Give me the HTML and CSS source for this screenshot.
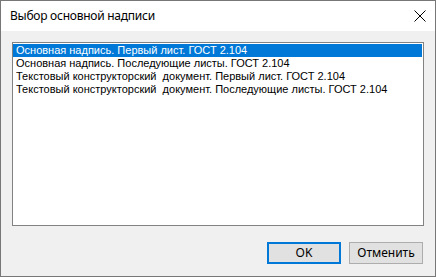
FILE: index.html
```html
<!DOCTYPE html>
<html lang="ru">
<head>
  <meta charset="utf-8">
  <title>Выбор основной надписи</title>
  <link rel="stylesheet" href="styles.css">
</head>
<body>
  <div class="dialog">
    <div class="title-bar">
      <span class="title">Выбор основной надписи</span>
      <button class="close-button" aria-label="Закрыть">
        <svg width="12" height="12" viewBox="0 0 12 12">
          <path d="M0.5 0.5 L11.5 11.5 M11.5 0.5 L0.5 11.5" stroke="#000" stroke-width="1" fill="none"/>
        </svg>
      </button>
    </div>
    <div class="content">
      <ul class="listbox">
        <li class="selected">Основная надпись. Первый лист. ГОСТ 2.104</li>
        <li>Основная надпись. Последующие листы. ГОСТ 2.104</li>
        <li>Текстовый конструкторский&nbsp; документ. Первый лист. ГОСТ 2.104</li>
        <li>Текстовый конструкторский&nbsp; документ. Последующие листы. ГОСТ 2.104</li>
      </ul>
      <div class="button-group">
        <button class="dlg-button default">OK</button>
        <button class="dlg-button">Отменить</button>
      </div>
    </div>
  </div>
</body>
</html>
```

FILE: styles.css
```css
body {
  margin: 0;
  padding: 0;
  background-color: #ffffff;
}

.dialog {
  width: 436px;
  height: 277px;
  box-sizing: border-box;
  border: 1px solid #777777;
  background-color: #f0f0f0;
  display: flex;
  flex-direction: column;
}

.title-bar {
  height: 30px;
  background-color: #ffffff;
  display: flex;
  align-items: center;
  justify-content: space-between;
  padding-left: 9px;
}

.title {
  font-family: "Noto Sans", sans-serif;
  font-size: 12px;
  letter-spacing: -0.25px;
  color: #000000;
  padding-bottom: 1px;
}

.close-button {
  width: 46px;
  height: 30px;
  border: none;
  background: none;
  padding: 0 9px 1px 0;
  display: flex;
  align-items: center;
  justify-content: flex-end;
}

.content {
  flex: 1;
  display: flex;
  flex-direction: column;
  padding: 11px 11px 12px 11px;
}

.listbox {
  list-style: none;
  margin: 0;
  padding: 1px 1px 0 0;
  height: 184px;
  box-sizing: border-box;
  border: 1px solid #828282;
  background-color: #ffffff;
  font-family: "Liberation Sans", Arial, sans-serif;
  font-size: 11px;
  color: #000000;
}

.listbox li {
  height: 13px;
  line-height: 13px;
  padding-left: 3px;
  white-space: pre;
}

.listbox li.selected {
  background-color: #0078d7;
  color: #ffffff;
}

.button-group {
  display: flex;
  justify-content: flex-end;
  gap: 8px;
  margin-top: auto;
  padding-right: 1px;
}

.dlg-button {
  width: 74px;
  height: 22px;
  box-sizing: border-box;
  border: 1px solid #adadad;
  background-color: #e1e1e1;
  font-family: "Noto Sans", sans-serif;
  font-size: 12px;
  color: #000000;
  padding: 0;
  line-height: 18px;
}

.dlg-button.default {
  border: 2px solid #0078d7;
}
```
